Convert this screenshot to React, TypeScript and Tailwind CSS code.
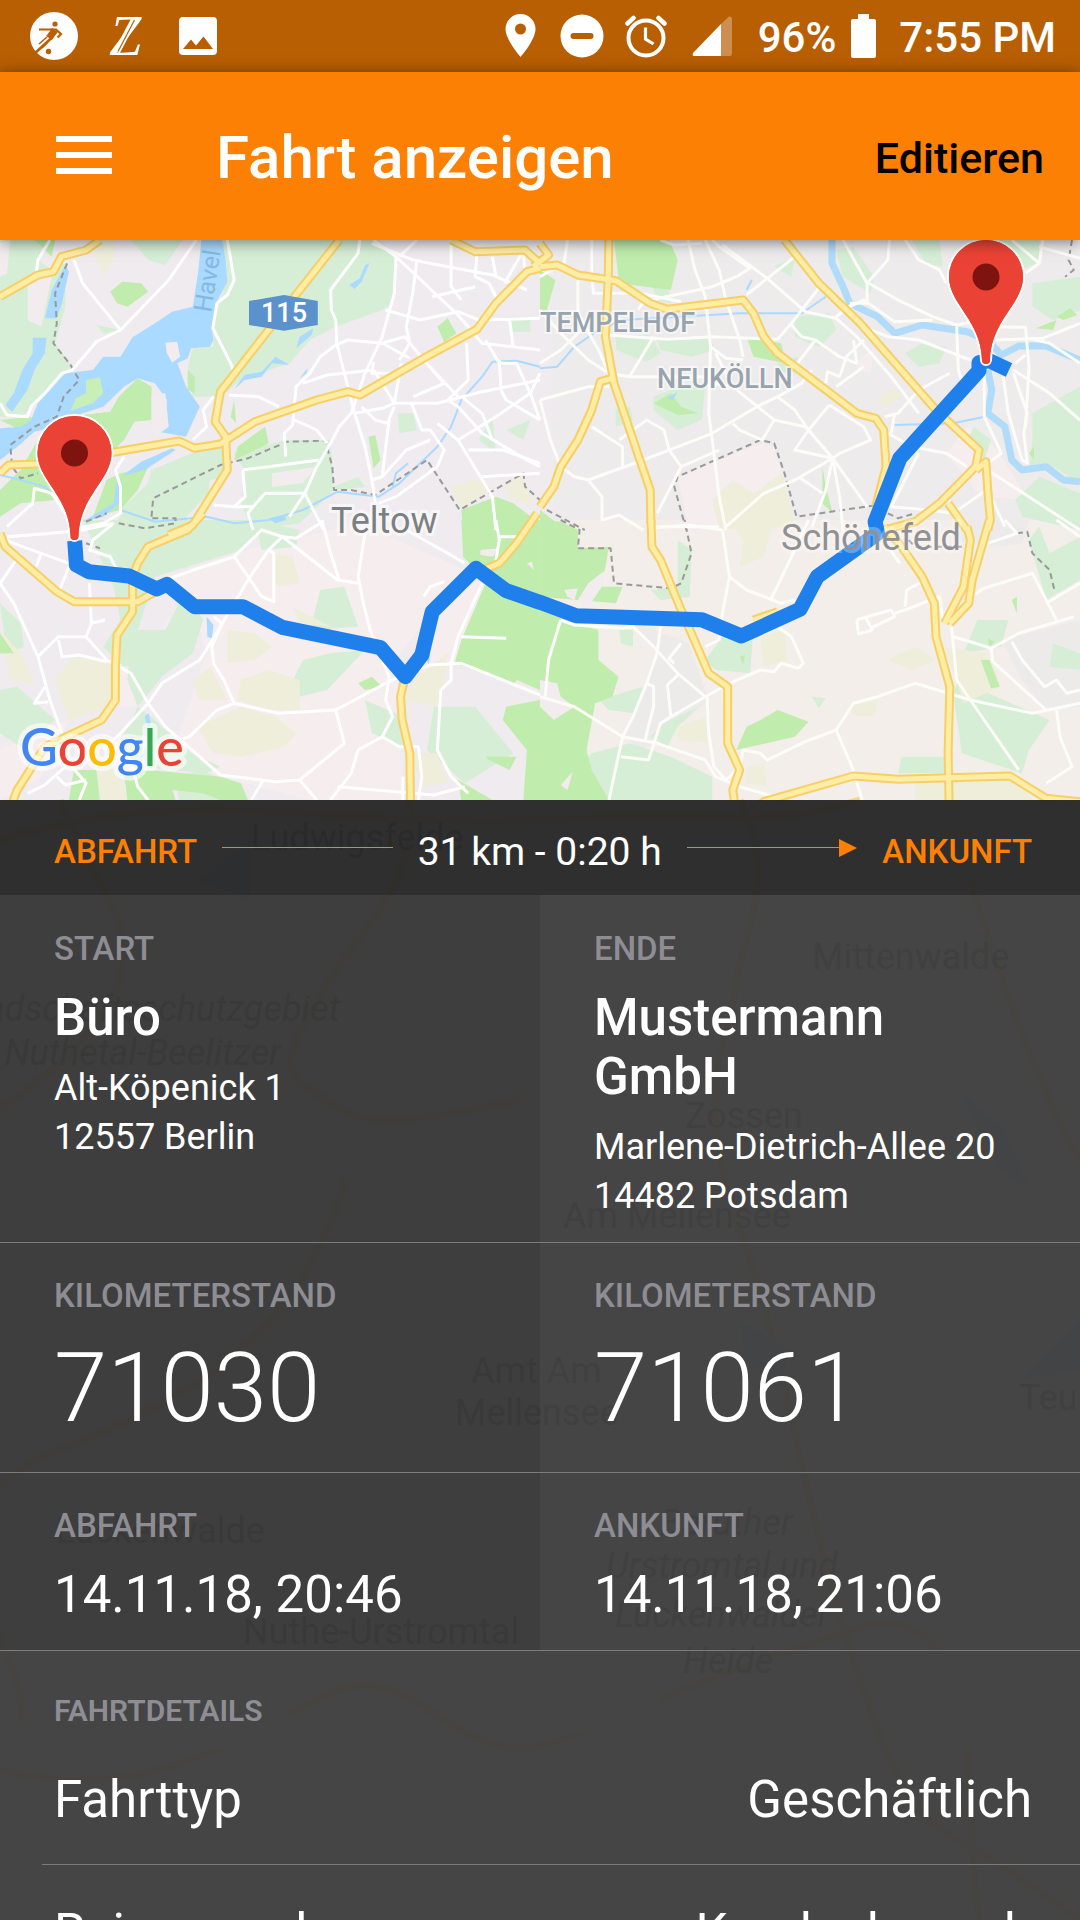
import type { ReactNode } from "react";

/* ------------------------------------------------------------------ */
/* Map                                                                 */
/* ------------------------------------------------------------------ */

type Tile = "a" | "b" | "c" | "d";
type Shape = [Tile, string];

const TILE_ORIGIN: Record<Tile, [number, number]> = {
  a: [0, 0],
  b: [540, 0],
  c: [0, 280],
  d: [540, 280],
};

/* Map vectors are stored in tile units; this turns them into map units. */
function project([tile, points]: Shape): string {
  const [ox, oy] = TILE_ORIGIN[tile];
  return points
    .split(" ")
    .map((pair) => {
      const [x, y] = pair.split(",").map(Number);
      return `${(ox + x / 2.904).toFixed(1)},${(oy + y / 3).toFixed(1)}`;
    })
    .join(" ");
}

const suburbs: Shape[] = [
  ["d", "260,300 430,370 490,540 400,620 300,690 240,650 340,400"],
  ["d", "1340,360 1568,300 1568,560 1470,570 1400,480"],
  ["d", "1200,0 1420,0 1400,70 1330,80 1200,60"],
];

const fields: Shape[] = [
  ["c", "480,170 680,100 1040,10 1350,150 1250,280 1150,420 1170,840 900,840 600,760 520,640 600,400 560,260"],
  ["c", "430,90 490,95 480,160 440,165"],
  ["c", "330,400 390,420 400,560 350,560"],
  ["c", "0,690 140,620 200,600 120,770 0,840"],
  ["c", "480,300 580,300 540,400 470,380"],
  ["c", "1350,150 1420,200 1320,430 1230,470 1250,290"],
  ["a", "800,10 860,40 850,55 810,30"],
  ["a", "975,190 995,180 985,235"],
  ["b", "400,710 640,610 680,620 745,860 430,870"],
  ["b", "930,350 970,330 960,400 920,390"],
  ["b", "1240,560 1320,620 1420,780 1280,770 1180,640"],
];

const beige: Shape[] = [
  ["a", "270,0 330,0 335,45 305,105 275,50"],
  ["a", "1310,740 1380,718 1430,745 1340,805"],
  ["a", "1465,735 1515,705 1550,790 1480,780"],
  ["b", "500,780 560,720 620,760 700,700 745,860 520,870"],
  ["b", "980,470 1030,445 1050,470 1000,500"],
  ["c", "210,410 330,430 320,560 200,600 160,480"],
  ["c", "0,330 60,400 100,490 30,480"],
  ["c", "570,620 700,560 800,590 860,640 830,680 700,710 620,700"],
  ["c", "700,480 780,450 870,480 870,570 780,570 690,540"],
  ["c", "660,330 740,340 790,380 740,420 660,430"],
  ["c", "850,260 960,320 870,310"],
  ["c", "560,480 610,440 660,540 580,540"],
  ["c", "790,100 850,110 870,190 800,200"],
  ["c", "1200,480 1300,400 1280,560 1170,540"],
  ["c", "1200,700 1270,700 1300,790 1220,800"],
  ["c", "280,740 340,740 370,840 290,840"],
  ["d", "550,0 680,0 650,110 580,140 590,60"],
  ["d", "1010,420 1090,380 1150,420 1080,450"],
  ["d", "1160,380 1300,400 1340,500 1230,550 1200,450"],
  ["d", "1090,780 1400,780 1430,840 1090,840"],
  ["d", "640,350 710,330 720,420 650,440"],
  ["d", "900,560 980,540 970,590 910,585"],
  ["d", "400,620 480,590 490,670 400,660"],
  ["d", "600,740 650,730 660,800 600,790"],
];

const parks: Shape[] = [
  ["a", "0,0 130,0 110,60 150,90 190,70 190,200 160,310 210,380 110,490 60,530 0,530"],
  ["a", "640,0 1100,0 1150,60 1140,190 1110,210 975,260 900,300 840,370 700,420 640,470 560,470 545,380 560,325 620,320 620,250 655,130"],
  ["a", "380,0 530,0 480,75 430,60"],
  ["a", "280,255 350,270 300,280"],
  ["a", "440,690 650,600 660,700 540,830 500,870 330,870 360,800 430,730"],
  ["a", "680,640 830,600 960,600 970,750 870,850 730,870 700,790 710,690"],
  ["a", "1155,520 1200,520 1210,570 1160,580"],
  ["a", "1470,570 1540,540 1520,600"],
  ["a", "1430,530 1440,640 1390,600"],
  ["a", "970,740 1040,710 1060,740 980,750"],
  ["a", "1480,230 1540,230 1540,275 1490,275"],
  ["c", "240,0 780,0 700,90 450,170 400,330 410,430 360,440 300,380 350,300 330,200"],
  ["c", "380,330 480,330 540,210 590,300 560,400 470,470 400,560 370,480"],
  ["c", "0,510 50,500 160,600 60,680 0,640"],
  ["c", "0,250 60,310 70,380 20,400"],
  ["c", "400,560 440,590 540,690 640,740 600,760 420,740 340,690"],
  ["c", "930,210 1000,200 1040,320 900,330"],
  ["c", "880,420 960,400 1060,390 950,510 830,540 860,460"],
  ["c", "740,0 870,30 860,80 760,90"],
  ["c", "1060,540 1170,590 1170,680 1080,640"],
  ["c", "1260,560 1380,560 1490,700 1350,790 1240,690"],
  ["c", "510,770 590,750 680,800 640,840 520,840"],
  ["b", "680,80 740,50 730,110"],
  ["b", "220,290 320,285 350,340 310,365 220,330"],
  ["b", "340,300 490,290 510,330 440,350 350,330"],
  ["b", "740,230 840,220 860,270 810,320 740,290"],
  ["b", "690,370 750,350 740,400 700,395"],
  ["b", "860,30 910,20 970,110 960,160 880,110"],
  ["b", "1080,0 1160,0 1170,80 1120,70"],
  ["b", "1330,0 1450,0 1450,70 1390,90"],
  ["b", "1430,130 1568,110 1568,210 1490,240 1430,200"],
  ["b", "1430,520 1568,440 1568,730 1490,680 1420,690 1430,600"],
  ["b", "1380,780 1450,710 1568,760 1568,870 1400,830"],
  ["b", "330,470 430,430 480,440 470,540 400,570 330,510"],
  ["b", "1060,340 1110,310 1180,320 1160,370 1100,380"],
  ["b", "1260,560 1310,600 1290,660 1240,600"],
  ["b", "220,510 260,500 270,540 220,560"],
  ["b", "310,80 340,180 380,190 370,130"],
  ["d", "150,700 260,670 380,710 500,770 500,840 200,840 130,720"],
  ["d", "170,540 300,500 270,580 200,570"],
  ["d", "360,610 460,560 400,620 370,680 320,650"],
  ["d", "1215,480 1480,600 1420,690 1400,760 1225,700 1200,520"],
  ["d", "1050,710 1180,710 1180,760 1040,760"],
  ["d", "1480,100 1568,50 1568,180 1470,240 1420,60 1450,20"],
  ["d", "1490,370 1568,400 1568,450 1480,440"],
  ["d", "480,420 530,350 620,330 610,460 510,450"],
  ["d", "230,330 270,330 270,380 235,370"],
  ["d", "790,530 830,535 810,565"],
  ["d", "1230,400 1270,300 1360,300 1340,380"],
  ["d", "400,60 440,90 435,230 350,240 320,210 400,200"],
];

const woods: Shape[] = [
  ["a", "320,155 355,125 410,130 430,155 370,200 340,190"],
  ["a", "100,0 160,0 150,50"],
  ["a", "250,420 290,412 300,460 270,490 205,512 220,475 250,460"],
  ["a", "240,525 320,515 345,470 400,415 440,440 440,540 390,545 360,600 320,640 260,600"],
  ["a", "0,540 90,530 110,560 60,570"],
  ["a", "0,750 60,690 110,600 170,700 160,780 60,790 0,830"],
  ["a", "350,700 430,680 400,750 350,810 270,830 310,720"],
  ["a", "545,390 565,410 565,460 545,450"],
  ["a", "680,480 685,550 670,530"],
  ["a", "690,620 770,560 780,610 680,660"],
  ["a", "1070,590 1090,585 1105,660 1085,685"],
  ["a", "1270,260 1300,235 1325,280 1290,305"],
  ["a", "1340,810 1440,770 1490,790 1568,850 1568,880 1345,880"],
  ["b", "0,90 45,120 20,210 0,215"],
  ["b", "215,0 375,0 400,60 380,150 230,130"],
  ["b", "600,290 700,310 715,370 620,350"],
  ["b", "330,490 380,460 410,500 460,520 400,525"],
  ["b", "0,810 50,850 80,870 0,870"],
  ["b", "820,680 830,740 850,820 820,790"],
  ["b", "1440,265 1500,240 1490,270"],
  ["b", "1500,230 1540,205 1560,225 1520,240"],
  ["b", "1420,640 1435,620 1435,660"],
  ["c", "0,340 40,400 0,400"],
  ["c", "1340,0 1440,0 1568,0 1568,260 1480,230 1400,170 1345,110"],
  ["c", "1410,190 1568,250 1568,520 1440,470 1320,430 1340,360"],
  ["c", "1470,560 1568,540 1568,840 1520,840 1530,690 1460,600"],
  ["c", "1410,710 1500,710 1480,750 1420,720"],
  ["c", "1330,780 1430,840 1340,840"],
  ["c", "1040,490 1080,470 1110,500 1060,510"],
  ["c", "430,750 640,770 700,790 720,840 640,840 590,820 500,810 510,840 370,840 360,760"],
  ["c", "215,750 280,750 290,840 200,840"],
  ["d", "0,0 60,5 110,30 110,85 200,80 180,200 240,200 220,250 0,230"],
  ["d", "0,270 100,310 170,330 170,420 228,470 210,530 160,550 135,690 150,750 200,840 0,840"],
  ["d", "640,600 690,570 780,605 740,650 570,690 600,620"],
  ["d", "1280,420 1305,420 1335,500 1310,505"],
  ["d", "1370,240 1385,230 1385,280"],
  ["d", "1300,355 1320,365 1305,380"],
  ["d", "580,410 595,405 590,435"],
];

const clearings: Shape[] = [
  ["a", "80,110 150,110 120,260 80,240"],
  ["a", "480,308 515,305 523,350 500,368 485,340"],
  ["a", "0,10 30,0 20,100 0,110"],
  ["a", "440,465 480,460 490,560 450,590 440,540"],
  ["a", "790,700 920,680 880,730 790,740"],
  ["a", "610,720 640,715 600,790"],
  ["c", "1395,90 1450,85 1430,110 1395,105"],
  ["c", "1530,130 1545,125 1550,150"],
  ["c", "1500,480 1568,510 1568,530 1490,500"],
  ["d", "70,210 110,205 100,240 80,230"],
  ["d", "110,240 140,190 190,150 180,200 140,260"],
  ["d", "0,480 50,490 60,530 100,560 40,600 0,560"],
  ["d", "60,795 95,755 80,810"],
];

const lakes: Shape[] = [
  ["a", "585,0 645,0 655,60 660,125 630,185 615,260 620,300 610,320 555,325 545,355 515,370 540,440 580,500 540,590 460,575 480,530 485,480 450,430 400,415 360,440 330,470 300,500 240,520 160,560 100,575 50,620 0,660 0,565 60,560 90,540 110,490 190,400 270,390 300,350 350,350 385,292 450,250 500,215 560,200 575,100"],
  ["a", "95,293 135,293 130,340 100,390 80,450 35,515 15,495 40,460 65,390 95,340"],
  ["a", "190,75 200,95 180,190 165,235 130,235 150,150"],
  ["a", "1060,75 1073,70 1050,125 1030,147 1015,135 1045,115"],
  ["a", "870,290 910,265 905,285 860,325"],
  ["a", "710,405 760,395 800,350 840,375 790,370 760,410 710,420 680,448"],
  ["a", "870,415 893,385 890,400"],
  ["a", "780,835 830,825 830,840 800,850"],
  ["a", "240,845 330,790 340,720 410,665 500,625 510,630 420,690 350,710 345,790 300,830"],
  ["c", "600,290 620,315 615,355 602,350"],
  ["c", "420,590 432,580 438,610 428,620"],
  ["c", "1235,410 1250,400 1245,435"],
  ["b", "370,475 400,455 385,480"],
];

const islands: Shape[] = [["a", "250,420 290,412 300,460 270,490 205,512 220,475 250,460"]];

const canals: Shape[] = [
  ["a", "1568,380 1500,362 1430,365 1400,410 1340,480 1310,560 1270,620 1160,730 1100,770 980,755 880,810 780,840 680,850 600,830 450,845 350,810"],
  ["a", "1140,740 1150,700 1185,670"],
  ["a", "0,705 60,720 130,740 160,770"],
  ["b", "0,385 50,380 100,320 170,270 240,240 580,220 760,220 830,170"],
  ["b", "600,150 615,120"],
  ["b", "1030,555 1200,550 1290,530"],
];

const rivers: Shape[] = [
  ["b", "848,0 848,70 880,140 900,190 980,230 1030,280 1110,255 1240,275 1300,300 1340,345 1390,318 1470,318 1568,360"],
  ["b", "1300,390 1312,450 1300,520 1350,560 1370,660 1400,690 1470,680 1520,720 1568,725"],
];

const streets: Shape[] = [
  ["a", "105,100 110,60 145,0"],
  ["a", "215,60 240,130 350,270 490,120 570,0"],
  ["a", "350,270 280,305 210,390 180,400 130,460 90,500 80,530 20,525 0,490"],
  ["a", "660,0 680,120 660,165 630,190 618,265 670,370 680,400"],
  ["a", "1045,0 1040,40 960,150 962,210 975,240 978,310 1020,480 1030,520 1060,620 1080,720 1090,790"],
  ["a", "1085,0 1150,50 1145,160 1110,290 1060,400 1030,490"],
  ["a", "1150,50 1330,225 1400,310 1568,330"],
  ["a", "1080,10 1200,60 1300,80 1430,105 1530,150"],
  ["a", "1210,0 1160,50"],
  ["a", "1310,0 1310,140 1340,180"],
  ["a", "1210,65 1200,150 1180,260 1190,310 1160,360"],
  ["a", "1120,210 1220,240 1330,215 1390,240 1568,235"],
  ["a", "1385,40 1380,110 1420,130 1450,190"],
  ["a", "1430,50 1440,110"],
  ["a", "1515,40 1465,130"],
  ["a", "1520,40 1525,100"],
  ["a", "1255,170 1380,140"],
  ["a", "975,315 930,350 900,400 860,440 855,490 850,555 825,580 830,650"],
  ["a", "975,315 1010,300 1110,310 1175,290 1230,360 1330,470"],
  ["a", "1110,310 1190,355"],
  ["a", "880,430 950,405 1085,390 1110,430 1145,490 1270,490 1400,455 1568,420"],
  ["a", "1085,365 1080,400 1160,400"],
  ["a", "1145,500 1125,550 1090,540 1050,500"],
  ["a", "1030,490 1020,520 985,560 960,610 920,680 885,760 840,830"],
  ["a", "1030,520 1110,505 1145,490 1165,370"],
  ["a", "855,540 920,570 950,610"],
  ["a", "705,690 780,680 925,660"],
  ["a", "705,690 712,770 680,800 620,795"],
  ["a", "680,800 735,800 770,760 885,760 940,870"],
  ["a", "735,800 720,820 735,870"],
  ["a", "1195,490 1225,570 1250,570 1290,630 1270,680 1150,770 1100,790"],
  ["a", "1080,720 1110,710 1180,630 1250,600"],
  ["a", "1110,710 1130,540"],
  ["a", "1355,310 1360,420 1300,480 1330,500 1400,580 1530,660 1568,680"],
  ["a", "1270,550 1330,600 1430,770 1440,870"],
  ["a", "1360,630 1460,630 1568,670"],
  ["a", "1400,710 1568,700"],
  ["a", "1450,360 1455,450 1470,480 1568,540"],
  ["a", "1410,300 1450,370 1500,370 1540,460 1568,540"],
  ["a", "1480,240 1490,320"],
  ["a", "1568,400 1540,460 1440,530 1330,600"],
  ["a", "1230,360 1290,430 1200,470"],
  ["a", "1340,470 1400,520 1430,600"],
  ["a", "665,465 750,470 810,500"],
  ["a", "620,470 590,510 600,560 560,600"],
  ["a", "335,690 350,740 350,820 300,850 200,870"],
  ["a", "360,650 335,690"],
  ["a", "20,860 95,790 100,745 150,760 190,820"],
  ["c", "0,190 40,250 110,410 145,540 180,640"],
  ["c", "110,410 170,350 250,350 310,420 380,460 430,550 480,620 640,765 800,785 870,780 1000,670 975,570 1120,490 1190,455 1250,435 1340,430 1568,525"],
  ["c", "430,550 350,640 300,690"],
  ["c", "310,425 230,405 180,410 170,360"],
  ["c", "260,190 265,310 305,300"],
  ["c", "250,350 270,300"],
  ["c", "0,50 40,70 200,130"],
  ["c", "0,190 60,100"],
  ["c", "105,140 120,100"],
  ["c", "20,50 150,40 240,30 330,10"],
  ["c", "330,10 270,60 260,90 320,110 350,170"],
  ["c", "165,230 200,140"],
  ["c", "430,550 470,490 580,420 640,320 720,180 780,90 795,100 795,245 760,230 680,110"],
  ["c", "480,180 590,140 680,110 760,30 820,50 980,180 1040,190"],
  ["c", "820,50 780,90"],
  ["c", "820,50 860,55 930,10"],
  ["c", "620,290 645,310 615,380 620,430 650,480 680,550 810,580 975,570"],
  ["c", "680,550 630,570 550,650 520,660"],
  ["c", "935,0 960,100 985,180"],
  ["c", "1060,40 1040,170 1055,250 1075,330 1130,470 1120,540 1140,590 1110,650 1040,690 1020,760 960,840"],
  ["c", "1180,30 1300,100 1350,130"],
  ["c", "1230,230 1250,200 1290,185"],
  ["c", "1400,190 1330,350 1310,430 1310,480 1280,510 1270,690 1310,770 1360,820"],
  ["c", "1340,350 1470,355"],
  ["c", "1440,0 1450,60 1440,120"],
  ["c", "1450,50 1500,50"],
  ["c", "1110,650 1160,680 1215,680 1225,770 1215,840"],
  ["c", "1170,770 1170,840"],
  ["c", "870,780 920,840"],
  ["c", "980,800 1260,825 1350,800"],
  ["c", "765,780 730,840"],
  ["c", "80,820 130,795 200,730 250,790 230,840"],
  ["c", "165,770 190,795 250,780"],
  ["c", "385,740 400,800 430,840"],
  ["c", "130,500 100,550 140,545"],
];

const eastStreets: Shape[] = [
  ["b", "0,110 70,70 80,0"],
  ["b", "150,0 150,90 155,160 290,160 410,185"],
  ["b", "110,120 110,220 170,330 200,400"],
  ["b", "0,210 60,280 140,360 200,400 260,410 480,410"],
  ["b", "200,285 370,298 500,290 690,298 730,250 820,130"],
  ["b", "150,240 60,330 0,370"],
  ["b", "430,0 450,90 480,170 495,320 540,355 590,360"],
  ["b", "350,0 390,15 470,10"],
  ["b", "480,0 520,90 540,180 580,300 590,350"],
  ["b", "285,210 300,185 500,140 570,110 610,85 520,20 500,0"],
  ["b", "600,165 660,115 740,50"],
  ["b", "530,15 660,115 770,215 860,235 920,290 1020,410 1100,520"],
  ["b", "495,320 490,520 505,640 520,770 540,870"],
  ["b", "500,430 560,440 620,490 680,540 770,560 850,655"],
  ["b", "560,440 510,340"],
  ["b", "500,580 630,500 690,470 760,430 790,390"],
  ["b", "560,550 580,570 645,600 680,540"],
  ["b", "690,470 740,510 780,570 850,655"],
  ["b", "330,290 260,410"],
  ["b", "0,480 140,440 200,440"],
  ["b", "0,480 30,600 60,680"],
  ["b", "150,560 240,620 240,680"],
  ["b", "140,720 300,660 500,580"],
  ["b", "60,680 100,710 140,720 180,770 180,840 230,825 300,870"],
  ["b", "230,600 310,540 360,570 375,630 410,680 340,820"],
  ["b", "410,680 520,630"],
  ["b", "850,655 740,720 650,760 540,860"],
  ["b", "850,655 870,770 880,870"],
  ["b", "850,655 830,750 790,860"],
  ["b", "850,655 950,800"],
  ["b", "750,710 820,760"],
  ["b", "840,495 780,570 740,630 850,655 870,640 960,600 940,560 840,495"],
  ["b", "725,250 760,290 800,300 870,350 920,370 910,300"],
  ["b", "800,300 740,380"],
  ["b", "830,430 835,395 870,410 890,350 940,300"],
  ["b", "860,440 940,380"],
  ["b", "860,230 910,190"],
  ["b", "880,0 950,130 950,190 900,190"],
  ["b", "1060,0 1100,60 1160,90 1180,130"],
  ["b", "950,130 1010,60 1015,0"],
  ["b", "955,130 1040,180 1140,230 1210,255 1280,240"],
  ["b", "900,200 940,180 1030,245 1140,240"],
  ["b", "950,265 1010,290 1100,300 1250,360"],
  ["b", "1210,260 1215,390 1230,440"],
  ["b", "1310,260 1410,262 1420,380 1410,560"],
  ["b", "1320,300 1460,295 1568,250"],
  ["b", "1420,295 1480,310 1568,370"],
  ["b", "1290,400 1290,530 1340,640 1300,670"],
  ["b", "1345,410 1360,520 1400,660 1415,670 1405,580 1415,520 1375,400"],
  ["b", "1375,390 1480,460 1568,540"],
  ["b", "1380,370 1410,345"],
  ["b", "1370,0 1450,70 1460,0"],
  ["b", "1450,70 1410,100"],
  ["b", "1450,20 1568,55"],
  ["b", "1010,580 1080,620 1180,640 1240,680"],
  ["b", "1100,640 1020,800 1130,810 1200,820 1310,740"],
  ["b", "1170,760 1210,810"],
  ["b", "1300,690 1568,870"],
  ["b", "1030,520 1020,580"],
  ["b", "1000,530 1040,520 1100,450 1190,400"],
  ["b", "1300,750 1350,860"],
  ["b", "310,860 520,860"],
  ["d", "0,530 100,560 240,650 340,670 480,720 510,770 580,800 680,830"],
  ["d", "60,300 25,420 15,530"],
  ["d", "200,840 240,650 270,590 310,490 340,400 350,320"],
  ["d", "60,300 100,315 240,325 270,320 330,380 400,460 480,530"],
  ["d", "380,590 430,560 480,530 550,490 640,450 680,455 700,430 750,445 765,430 730,350 690,320"],
  ["d", "485,530 490,640 505,740 540,780 580,740 590,690 640,700 660,720 770,665 860,630 885,590 910,550 980,530 1090,490 1250,540 1430,580 1568,550"],
  ["d", "860,630 910,750 935,840"],
  ["d", "320,25 430,15 530,30 550,170 530,280 520,360 480,380"],
  ["d", "550,170 600,210 700,250 740,240"],
  ["d", "670,240 740,90 780,0"],
  ["d", "880,0 880,50"],
  ["d", "1010,80 1045,130"],
  ["d", "1195,320 1210,480 1270,570 1390,750"],
  ["d", "1200,350 1250,365 1310,385 1390,340 1550,290"],
  ["d", "1310,385 1315,425 1470,570"],
  ["d", "1250,230 1290,205 1430,160 1470,240 1500,300"],
  ["d", "1370,365 1400,420 1465,500 1500,480 1530,520 1568,510"],
  ["d", "1500,570 1510,650 1545,740 1470,790"],
  ["d", "1300,70 1385,40 1350,0"],
  ["d", "1470,250 1568,190"],
  ["d", "1500,0 1568,50"],
  ["d", "1060,270 1160,230 1170,300"],
  ["d", "1060,260 1065,210 1110,185"],
  ["d", "920,300 945,292 965,330 925,342 920,300"],
  ["d", "945,292 1020,270 1030,290 960,325"],
  ["d", "1030,280 1060,270"],
  ["d", "410,370 375,415 390,430"],
  ["d", "405,460 370,495 380,590 350,610 315,720 235,710"],
  ["d", "310,490 330,500 330,560 305,660"],
];

const highways: Shape[] = [
  ["a", "0,170 110,105 155,95 178,50 250,30 290,0"],
  ["a", "985,0 840,190 640,455 625,545 655,590 660,690 560,855 490,885"],
  ["a", "0,700 25,675 110,672 330,637 520,603 565,625 640,612 740,545 920,480 1010,455 1045,465 1230,355 1385,268 1440,190 1530,95 1568,85"],
  ["a", "1310,0 1340,15 1380,35 1525,30 1568,70"],
  ["c", "590,-20 545,30 430,80 400,130 385,170 385,275 340,345 335,440 335,540 295,600 130,680 50,810 35,850"],
  ["c", "0,40 15,80 165,215 215,245 400,245 460,210"],
  ["c", "1560,-20 1500,70 1450,130 1380,160"],
  ["c", "1177,470 1163,530 1168,600 1190,700 1192,850"],
  ["b", "0,80 50,75 110,105 220,122 320,190 370,208 590,180 620,220 650,290 690,340 920,520 975,535 998,570 1005,680 975,800"],
  ["b", "-20,80 25,45 0,10"],
  ["b", "200,0 198,120 190,290 215,430 290,660 320,750 322,850"],
  ["b", "210,415 175,425 150,510 110,600 60,680 40,740 0,800"],
  ["b", "710,0 810,130 930,250 1150,510 1275,630 1265,680 1160,790 1090,845 1000,870"],
  ["b", "1265,690 1295,665 1300,750 1308,840 1300,870"],
  ["b", "1185,790 1240,870"],
  ["d", "322,0 325,80 350,120 410,270 490,460 545,500 545,670 580,750 560,810 565,850"],
  ["d", "1305,0 1255,180 1245,250 1190,310"],
  ["d", "1240,20 1250,60 1230,200 1175,310"],
  ["d", "1000,20 1050,80 1110,170 1145,250 1150,350 1190,500 1185,700 1188,850"],
  ["d", "620,300 690,275"],
  ["d", "620,870 650,845 910,768 1040,778 1365,768 1470,835 1568,845"],
];

const borders: Shape[] = [
  ["a", "195,70 160,160 165,250 155,310 205,375 230,420 185,470 165,530 100,560 30,615 35,680 60,715 110,700"],
  ["a", "440,830 445,775 640,675 720,655 835,605 945,602 965,680 970,750 1020,750 1090,765 1240,660 1335,810 1520,700 1525,740 1568,780"],
  ["a", "345,850 420,865 510,850 510,835 440,835"],
  ["a", "250,845 310,820"],
  ["c", "250,70 290,85"],
  ["b", "20,810 130,870"],
  ["b", "425,870 390,740 400,710 640,600 680,610 710,700 745,830 980,795"],
  ["b", "1545,0 1535,60 1550,90 1525,110"],
  ["b", "1010,820 1040,835 1090,820"],
  ["d", "60,0 115,30 110,85 205,85 215,190 380,205 410,190 440,100 420,0"],
  ["d", "1385,40 1415,35 1430,100 1480,150 1495,215"],
  ["d", "1070,60 1090,80 1260,80"],
];

const route: Shape[] = [
  ["c", "217,62 222,135 258,155 375,168 455,207 485,193 565,260 705,260 820,322 1105,383 1177,470 1225,405 1255,275 1382,145 1470,212 1568,247"],
  ["d", "0,247 105,287 470,299 585,348 755,268 805,170 980,40 973,5"],
  ["b", "973,845 1045,655 1275,392 1275,368 1305,362 1362,390"],
];

const routeLine = route.map(project).join(" ");

const farLabels: { x: number; y: number; text: string; italic?: boolean; end?: boolean }[] = [
  { x: 251, y: 610, text: "Ludwigsfelde" },
  { x: 340, y: 781, text: "Landschaftsschutzgebiet", italic: true, end: true },
  { x: 281, y: 825, text: "Nuthetal-Beelitzer", italic: true, end: true },
  { x: 812, y: 729, text: "Mittenwalde" },
  { x: 685, y: 888, text: "Zossen" },
  { x: 563, y: 988, text: "Am Mellensee" },
  { x: 471, y: 1143, text: "Amt Am" },
  { x: 455, y: 1185, text: "Mellensee" },
  { x: 1019, y: 1170, text: "Teupitz" },
  { x: 56, y: 1303, text: "Luckenwalde" },
  { x: 243, y: 1404, text: "Nuthe-Urstromtal" },
  { x: 660, y: 1295, text: "Baruther", italic: true },
  { x: 606, y: 1338, text: "Urstromtal und", italic: true },
  { x: 615, y: 1387, text: "Luckenwalder", italic: true },
  { x: 683, y: 1433, text: "Heide", italic: true },
];

function Areas({ shapes, className }: { shapes: Shape[]; className: string }) {
  return (
    <g className={className}>
      {shapes.map((shape) => (
        <polygon key={shape[0] + shape[1]} points={project(shape)} />
      ))}
    </g>
  );
}

function Lines({ shapes, className }: { shapes: Shape[]; className: string }) {
  return (
    <g className={className} fill="none" strokeLinejoin="round">
      {shapes.map((shape) => (
        <polyline key={shape[0] + shape[1]} points={project(shape)} />
      ))}
    </g>
  );
}

function Pin({ x, y }: { x: number; y: number }) {
  return (
    <g transform={`translate(${x} ${y})`}>
      <path
        d="M-4-4C-5-44-37-60-37-87a37 37 0 1 1 74 0C37-60 5-44 4-4a4 4 0 0 1-8 0Z"
        className="fill-[#ea4335] stroke-white stroke-[4] [paint-order:stroke]"
      />
      <path
        d="M-4-4C-5-44-37-60-37-87a37 37 0 1 1 74 0C37-60 5-44 4-4a4 4 0 0 1-8 0Z"
        className="fill-[#ea4335]"
      />
      <circle cy={-87} r={13.5} className="fill-[#7f1310]" />
    </g>
  );
}

function RouteMap() {
  return (
    <svg
      role="img"
      aria-label="Karte der Fahrt"
      viewBox="0 0 1080 1680"
      preserveAspectRatio="xMidYMin slice"
      className="absolute inset-0 h-full w-full bg-[#efebee]"
    >
      <rect x={553} width={527} height={280} className="fill-[#edebeb]" />
      <rect x={540} y={280} width={540} height={1400} className="fill-[#f4eeea]" />
      <Areas shapes={suburbs} className="fill-[#ecebea]" />
      <Areas shapes={fields} className="fill-[#f6edee]" />
      <Areas shapes={parks} className="fill-[#d6eed6]" />
      <Areas shapes={beige} className="fill-[#eeeedb]" />
      <Areas shapes={woods} className="fill-[#c0ecad]" />
      <Areas shapes={lakes} className="fill-[#aadaff]" />
      <Areas shapes={clearings} className="fill-[#f2ecee]" />
      <Areas shapes={islands} className="fill-[#c8efb8]" />
      <Lines shapes={canals} className="stroke-[#aadaff] stroke-2" />
      <Lines shapes={rivers} className="stroke-[#b0dcfa] stroke-[7]" />
      <Lines shapes={borders} className="stroke-[#999999] stroke-2 [stroke-dasharray:6_4]" />
      <Lines shapes={streets} className="stroke-white stroke-3" />
      <Lines shapes={eastStreets} className="stroke-[#fcfcf8] stroke-3" />
      <Lines shapes={highways} className="stroke-[#f6cf69] stroke-[9]" />
      <Lines shapes={highways} className="stroke-[#ffeda4] stroke-[5]" />

      <g className="fill-none stroke-[#f3d77c] stroke-[7]">
        <path d="M0 600C200 540 340 590 540 580S760 590 860 560M60 560C90 640 150 690 110 760S20 850 0 870M410 560C420 640 360 690 330 740S270 830 310 850S340 900 520 860M345 940C310 1060 240 1140 60 1210S40 1420 20 1480M740 560C780 640 740 700 735 750S690 850 740 990S800 1260 860 1440S920 1560 1080 1680M970 640C1000 740 1040 850 1080 920" />
        <path d="M0 1530C160 1570 260 1480 340 1450S460 1540 560 1500S700 1440 850 1390S960 1600 980 1680" />
      </g>
      <g className="fill-[#aadaff]">
        <path d="M960 850L1005 890 1030 950 1000 930ZM740 1080L790 1110 780 1150 745 1120ZM1080 1080L1020 1140 1080 1130ZM200 640L250 600 250 660Z" />
      </g>
      <g className="fill-[#d6eed6]">
        <path d="M120 760L180 740 220 880 90 900ZM560 1220L660 1200 620 1290ZM500 1440L700 1390 650 1480 540 1500ZM90 1430L300 1420 280 1520 120 1490ZM900 1400L1080 1450V1560L950 1500Z" />
      </g>

      <polyline
        points={routeLine}
        className="fill-none stroke-[#1f80ec] stroke-[15]"
        strokeLinejoin="round"
      />

      <polygon
        points={project(["a", "723,183 825,165 923,183 923,255 825,272 723,255"])}
        className="fill-[#5b92cb]"
      />
      <text x={284} y={82} textAnchor="middle" className="fill-white text-[27px] font-medium">
        115
      </text>
      <text
        transform="translate(211 73) rotate(-81)"
        className="fill-[#86b9e2] text-[25px] font-normal"
      >
        Havel
      </text>
      <g className="fill-[#98a3ad] stroke-white/50 stroke-4 text-[27px] font-medium [paint-order:stroke]">
        <text x={540} y={92}>TEMPELHOF</text>
        <text x={657} y={148}>NEUKÖLLN</text>
      </g>
      <g className="fill-[#7c8082] stroke-white/50 stroke-6 text-[36px] [paint-order:stroke]">
        <text x={331} y={293}>Teltow</text>
        <text x={781} y={310} className="fill-[#8f9193] stroke-white/30">Schönefeld</text>
      </g>
      <g className="fill-[#6e6e6e] text-[36px]">
        {farLabels.map(({ x, y, text, italic, end }) => (
          <text key={text} x={x} y={y} textAnchor={end ? "end" : "start"} fontStyle={italic ? "italic" : "normal"}>
            {text}
          </text>
        ))}
      </g>

      <Pin x={74.5} y={300} />
      <Pin x={986} y={124} />

      <text
        x={20}
        y={526}
        className="stroke-white/60 stroke-[10] font-['Lato'] text-[52px] font-medium [paint-order:stroke]"
        strokeLinejoin="round"
      >
        <tspan className="fill-[#4285f4]">G</tspan>
        <tspan className="fill-[#ea4335]">o</tspan>
        <tspan className="fill-[#fbbc05]">o</tspan>
        <tspan className="fill-[#4285f4]">g</tspan>
        <tspan className="fill-[#34a853]">l</tspan>
        <tspan className="fill-[#ea4335]">e</tspan>
      </text>
    </svg>
  );
}

/* ------------------------------------------------------------------ */
/* Status bar                                                          */
/* ------------------------------------------------------------------ */

function StatusBar() {
  return (
    <div className="flex h-[72px] shrink-0 items-center justify-between bg-[#b85e03] pr-6 pl-[30px] text-white">
      <div className="flex items-center">
        <svg viewBox="0 0 48 48" className="mr-8 h-12 w-12" aria-hidden="true">
          <circle cx="24" cy="24" r="24" className="fill-white" />
          <g className="fill-none stroke-[#b85e03]">
            <path d="M9 17.500H26L31 22L27.500 25.500" strokeWidth="2.200" />
            <path d="M25 18L19 26" strokeWidth="7" />
            <path d="M22 25.500L4 42" strokeWidth="2.600" />
            <path d="M17 25L9 32M18 30L12 36" strokeWidth="1.600" />
          </g>
          <circle cx="25" cy="12" r="2.600" className="fill-[#b85e03]" />
          <circle cx="18.500" cy="39.500" r="2.700" className="fill-[#b85e03]" />
        </svg>
        <svg viewBox="0 0 32 40" className="mr-9 h-10 w-8 overflow-visible" aria-hidden="true">
          <text x="-1" y="39" className="fill-white font-['Liberation_Serif'] text-[58px] italic">
            Z
          </text>
          <path d="M24 3.500L7 36" className="stroke-white stroke-[6]" />
          <path d="M24.500 4L8 35.500" className="stroke-[#b85e03]" strokeWidth="1.200" />
        </svg>
        <svg viewBox="0 0 40 40" className="h-10 w-10" aria-hidden="true">
          <rect x="1" y="1" width="38" height="38" rx="4" className="fill-white" />
          <path d="M5 33L13 23.500L18 29.500L25.500 20.500L35 33Z" className="fill-[#b85e03]" />
        </svg>
      </div>
      <div className="flex items-center">
        <svg viewBox="0 0 30 44" className="mr-6 h-11 w-[31px]" aria-hidden="true">
          <path
            fillRule="evenodd"
            d="M15 0A15 15 0 0 0 0 15C0 26 15 43 15 43S30 26 30 15A15 15 0 0 0 15 0ZM15 9.500A5.500 5.500 0 1 1 15 20.500A5.500 5.500 0 0 1 15 9.500Z"
            className="fill-white"
          />
        </svg>
        <svg viewBox="0 0 44 44" className="mr-[21px] h-11 w-11" aria-hidden="true">
          <circle cx="22" cy="22" r="21.500" className="fill-white" />
          <path d="M13.500 22H30.500" strokeWidth="6" strokeLinecap="round" className="stroke-[#b85e03]" />
        </svg>
        <svg viewBox="0 0 42 44" className="mr-[25px] h-11 w-[42px] fill-none stroke-white" aria-hidden="true">
          <circle cx="21" cy="24" r="17.500" strokeWidth="4" />
          <path d="M20.500 13.500V25L28.500 30" strokeWidth="3.200" />
          <path d="M2.500 9.500L8.500 4M39.500 9.500L33.500 4" strokeWidth="4.500" strokeLinecap="round" />
        </svg>
        <svg viewBox="0 0 40 40" className="mr-[26px] h-10 w-10 fill-white" aria-hidden="true">
          <path d="M29 8L1 37Q0 40 2 40H29Z" />
          <path d="M29 8L37 .5Q40 0 40 3V37Q40 40 38 40H29Z" className="opacity-30" />
        </svg>
        <span className="mr-[15px] pt-1 text-[42px] leading-none font-medium">96%</span>
        <svg viewBox="0 0 25 44" className="mr-[23px] h-11 w-[25px] fill-white" aria-hidden="true">
          <path d="M7 0H18V5H23Q25 5 25 7V42Q25 44 23 44H2Q0 44 0 42V7Q0 5 2 5H7Z" />
        </svg>
        <span className="pt-1 text-[42px] leading-none font-medium">7:55 PM</span>
      </div>
    </div>
  );
}

/* ------------------------------------------------------------------ */
/* Panels                                                              */
/* ------------------------------------------------------------------ */

function Column({ label, className, children }: { label: string; className: string; children: ReactNode }) {
  return (
    <section className={`px-[54px] ${className}`}>
      <h3 className="text-[33px] leading-10 font-medium text-[#8d8d93]">{label}</h3>
      {children}
    </section>
  );
}

function Place({ name, street, city }: { name: string; street: string; city: string }) {
  return (
    <>
      <p className="mt-[19px] text-[51px] leading-[59px] font-medium">{name}</p>
      <p className="mt-[17px] text-[36px] leading-[49px]">{street}</p>
      <p className="text-[36px] leading-[49px]">{city}</p>
    </>
  );
}

const LEFT = "bg-[#383838]/97";
const RIGHT = "bg-[#3f3f3f]/97";

export default function App() {
  return (
    <div className="flex h-screen flex-col overflow-hidden bg-[#444444] font-['Roboto',sans-serif] text-white">
      <StatusBar />
      <header className="relative z-10 flex h-[168px] shrink-0 items-center bg-[#fc8004] pr-9 pl-14 shadow-[0_2px_14px_rgba(0,0,0,0.5)]">
        <button type="button" aria-label="Menü" className="mr-[104px] flex w-14 flex-col gap-2.5 pb-0.5">
          <span className="h-1.5 w-full bg-white" />
          <span className="h-1.5 w-full bg-white" />
          <span className="h-1.5 w-full bg-white" />
        </button>
        <h1 className="pt-1 text-[60px] leading-[66px] font-medium">Fahrt anzeigen</h1>
        <button type="button" className="ml-auto pt-1 text-[43px] leading-[50px] font-medium text-black">
          Editieren
        </button>
      </header>

      <main className="relative min-h-0 flex-1 overflow-hidden">
        <RouteMap />
        <div className="relative pt-[560px]">
          <div className="flex h-[95px] items-center gap-[25px] bg-[#282828]/97 pt-2 pr-12 pl-[54px]">
            <h2 className="text-[33px] leading-10 font-medium text-[#fd8004]">ABFAHRT</h2>
            <div className="mb-2 h-px flex-1 bg-[#fd8004]" />
            <p className="text-[39px] leading-10">31 km - 0:20 h</p>
            <div className="mb-2 flex flex-1 items-center">
              <div className="h-px flex-1 bg-[#fd8004]" />
              <svg viewBox="0 0 18 18" className="h-[18px] w-[18px] fill-[#fd8004]" aria-hidden="true">
                <path d="M0 0L18 9L0 18Z" />
              </svg>
            </div>
            <h2 className="text-[33px] leading-10 font-medium text-[#fd8004]">ANKUNFT</h2>
          </div>

          <div className="grid grid-cols-2 border-b border-[#7c7c7c]">
            <Column label="START" className={`${LEFT} pt-[34px] pb-[21px]`}>
              <Place name="Büro" street="Alt-Köpenick 1" city="12557 Berlin" />
            </Column>
            <Column label="ENDE" className={`${RIGHT} pt-[34px] pb-[21px]`}>
              <Place name="Mustermann GmbH" street="Marlene-Dietrich-Allee 20" city="14482 Potsdam" />
            </Column>
          </div>

          <div className="grid grid-cols-2 border-b border-[#7c7c7c]">
            <Column label="KILOMETERSTAND" className={`${LEFT} pt-[33px] pb-7`}>
              <p className="mt-4 text-[96px] leading-[112px] font-light">71030</p>
            </Column>
            <Column label="KILOMETERSTAND" className={`${RIGHT} pt-[33px] pb-7`}>
              <p className="mt-4 text-[96px] leading-[112px] font-light">71061</p>
            </Column>
          </div>

          <div className="grid grid-cols-2 border-b border-[#7c7c7c]">
            <Column label="ABFAHRT" className={`${LEFT} pt-[33px] pb-[26px]`}>
              <p className="mt-[19px] text-[51px] leading-[59px]">14.11.18, 20:46</p>
            </Column>
            <Column label="ANKUNFT" className={`${RIGHT} pt-[33px] pb-[26px]`}>
              <p className="mt-[19px] text-[51px] leading-[59px]">14.11.18, 21:06</p>
            </Column>
          </div>

          <section className={`${RIGHT} pt-10`}>
            <h3 className="px-[54px] text-[30px] leading-10 font-semibold text-[#8d8d93]">FAHRTDETAILS</h3>
            <dl className="ml-[42px] text-[51px] leading-[59px]">
              <div className="flex justify-between border-b border-[#7c7c7c] pt-[39px] pr-12 pb-[35px] pl-3">
                <dt>Fahrttyp</dt>
                <dd>Geschäftlich</dd>
              </div>
              <div className="flex justify-between border-b border-[#7c7c7c] pt-[38px] pr-12 pb-[35px] pl-3">
                <dt>Reisezweck</dt>
                <dd>Kundenbesuch</dd>
              </div>
            </dl>
          </section>
        </div>
      </main>
    </div>
  );
}
